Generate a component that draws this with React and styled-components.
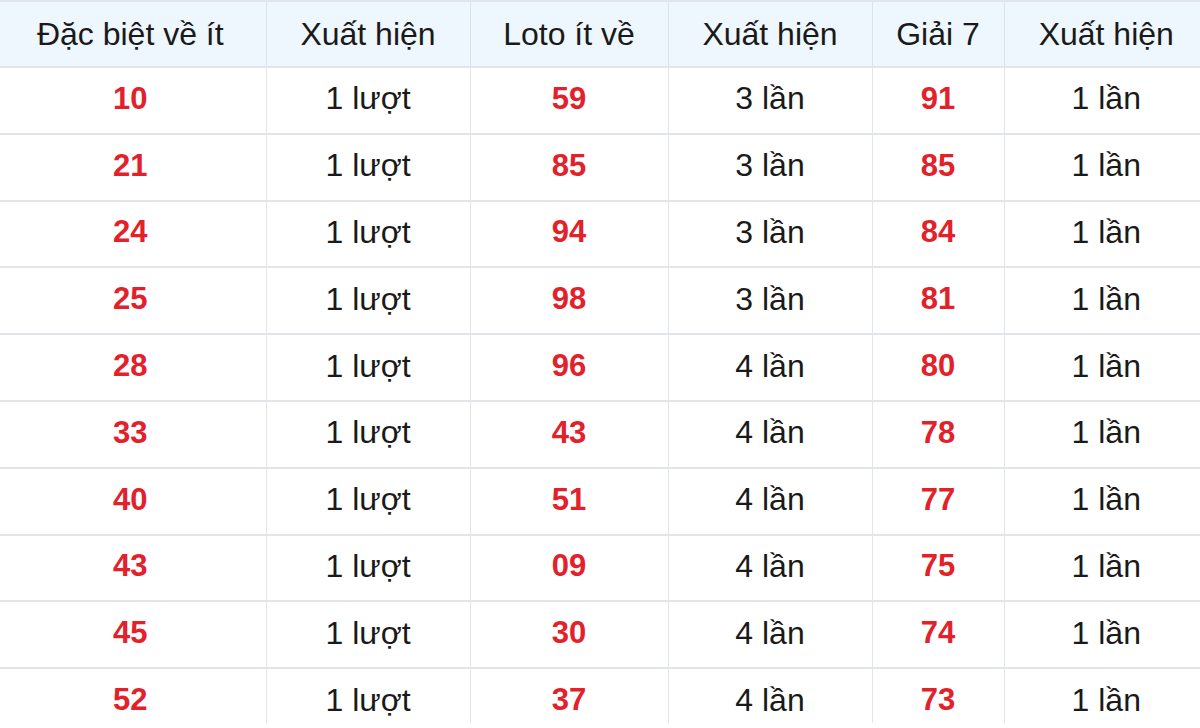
import React from "react";
import styled, { createGlobalStyle } from "styled-components";

const Global = createGlobalStyle`
  html, body { margin: 0; padding: 0; background: #ffffff; }
  body { overflow: hidden; font-family: "Liberation Sans", Arial, sans-serif; }
`;

const Frame = styled.div`
  height: 723px;
  overflow: hidden;
`;

const Table = styled.table`
  width: 1213px;
  margin-left: -5px;
  border-collapse: collapse;
  table-layout: fixed;
  font-family: "Liberation Sans", Arial, sans-serif;
  font-size: 32px;
  color: #1a1a1a;
`;

const HeadRow = styled.tr`
  height: 66px;
  background: #eef6fe;
`;

const Row = styled.tr`
  height: 66.8px;
`;

const Th = styled.th`
  font-weight: 400;
  text-align: center;
  vertical-align: middle;
  padding: 0;
  border: 1px solid #dde2e8;
  border-top: 2px solid #e2e6ea;
  &:first-child { border-left: none; }
  &:last-child { border-right: none; }
`;

const Td = styled.td`
  text-align: center;
  vertical-align: middle;
  padding: 0 0 3px;
  border: 1px solid #e2e5e9;
  border-top-width: 2px;
  color: ${(p) => (p.$hot ? "#e2212b" : "#1a1a1a")};
  font-weight: ${(p) => (p.$hot ? 700 : 400)};
  font-size: ${(p) => (p.$hot ? "31px" : "32px")};
  &:first-child { border-left: none; }
  &:last-child { border-right: none; }
`;

const widths = [271, 204, 198, 204, 132, 204];
const headers = ["Đặc biệt về ít", "Xuất hiện", "Loto ít về", "Xuất hiện", "Giải 7", "Xuất hiện"];

const rows = [
  ["10", "1 lượt", "59", "3 lần", "91", "1 lần"],
  ["21", "1 lượt", "85", "3 lần", "85", "1 lần"],
  ["24", "1 lượt", "94", "3 lần", "84", "1 lần"],
  ["25", "1 lượt", "98", "3 lần", "81", "1 lần"],
  ["28", "1 lượt", "96", "4 lần", "80", "1 lần"],
  ["33", "1 lượt", "43", "4 lần", "78", "1 lần"],
  ["40", "1 lượt", "51", "4 lần", "77", "1 lần"],
  ["43", "1 lượt", "09", "4 lần", "75", "1 lần"],
  ["45", "1 lượt", "30", "4 lần", "74", "1 lần"],
  ["52", "1 lượt", "37", "4 lần", "73", "1 lần"],
];

export default function App() {
  return (
    <>
      <Global />
      <Frame>
        <Table>
          <colgroup>
            {widths.map((w, i) => (
              <col key={i} style={{ width: w }} />
            ))}
          </colgroup>
          <thead>
            <HeadRow>
              {headers.map((h, i) => (
                <Th key={i}>{h}</Th>
              ))}
            </HeadRow>
          </thead>
          <tbody>
            {rows.map((r, i) => (
              <Row key={i}>
                {r.map((c, j) => (
                  <Td key={j} $hot={j % 2 === 0}>
                    {c}
                  </Td>
                ))}
              </Row>
            ))}
          </tbody>
        </Table>
      </Frame>
    </>
  );
}
